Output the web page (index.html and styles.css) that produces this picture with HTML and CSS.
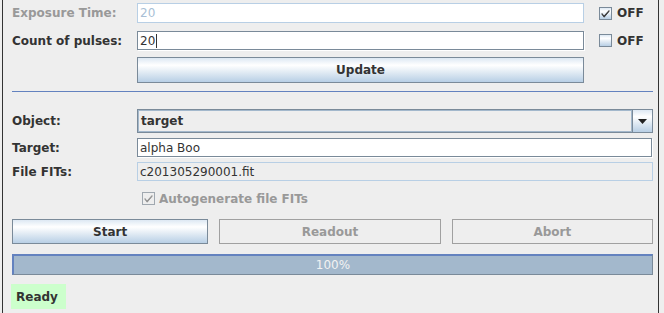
FILE: index.html
```
<!doctype html>
<html>

<head>
	<link rel="stylesheet" href="styles.css">
</head>

<body>
	<div class="frame">
		<div class="row r1">
			<label class="lbl off">Exposure Time:</label>
			<div class="field dis wide">20</div>
			<span class="check on"><svg width="9" height="9" viewBox="0 0 9 9"><path d="M1 4.5 L3 7 L8 1.5 L8 2.5 L3.2 8.2 L1 5.5 Z" fill="#333" stroke="#333" stroke-width="0.8"/></svg></span>
			<span class="ck-text">OFF</span>
		</div>
		<div class="row r2">
			<label class="lbl">Count of pulses:</label>
			<div class="field edit wide">20<span class="caret"></span></div>
			<span class="check"></span>
			<span class="ck-text">OFF</span>
		</div>
		<button class="btn update">Update</button>
		<div class="sep"></div>
		<div class="row r3">
			<label class="lbl">Object:</label>
			<div class="combo">
				<div class="combo-val">target</div>
				<div class="combo-arrow"><svg width="9" height="5" viewBox="0 0 9 5"><path d="M0 0 H9 L4.5 5 Z" fill="#222"/></svg></div>
			</div>
		</div>
		<div class="row r4">
			<label class="lbl">Target:</label>
			<div class="field edit full">alpha Boo</div>
		</div>
		<div class="row r5">
			<label class="lbl">File FITs:</label>
			<div class="field ro full">c201305290001.fit</div>
		</div>
		<div class="row r6">
			<span class="check dis-check"><svg width="9" height="9" viewBox="0 0 9 9"><path d="M1 4.5 L3 7 L8 1.5 L8 2.5 L3.2 8.2 L1 5.5 Z" fill="#8e8e8e" stroke="#8e8e8e" stroke-width="0.8"/></svg></span>
			<span class="ck-text off">Autogenerate file FITs</span>
		</div>
		<div class="row actions">
			<button class="btn start">Start</button>
			<button class="btn dis-btn readout">Readout</button>
			<button class="btn dis-btn abort">Abort</button>
		</div>
		<div class="progress"><span>100%</span></div>
		<div class="status">Ready</div>
	</div>
</body>

</html>
```
FILE: styles.css
```
body {
	margin: 0;
	background: #eeeeee;
	font-family: "DejaVu Sans", sans-serif;
	font-size: 12px;
	color: #333333;
}

.frame {
	margin-left: 2px;
	width: 657px;
	height: 313px;
	border-left: 1px solid #333;
	border-right: 1px solid #333;
	box-sizing: border-box;
	padding: 3px 5px 0 9px;
	display: flex;
	flex-direction: column;
}

.row {
	display: flex;
	align-items: center;
}

.lbl {
	width: 125px;
	flex: none;
	font-weight: bold;
}

.lbl.off,
.ck-text.off {
	color: #999999;
}

.field {
	box-sizing: border-box;
	height: 100%;
	padding: 0 2px;
	display: flex;
	align-items: center;
	white-space: nowrap;
}

.field.wide {
	width: 447px;
}

.field.full {
	width: 515px;
}

.field.dis {
	background: #fff;
	border: 1px solid #b8cfe5;
	color: #a9bfd6;
}

.field.edit {
	background: #fff;
	border: 1px solid #7a8a99;
	box-shadow: 1px 1px 0 #fff;
}

.field.ro {
	width: 516px;
	border: 1px solid #b8cfe5;
	background: #eeeeee;
}

.caret {
	display: inline-block;
	width: 1px;
	height: 14px;
	background: #333;
	margin-left: 1px;
}

.r1 {
	height: 20px;
}

.r2 {
	height: 19px;
	margin-top: 8px;
}

.check {
	box-sizing: border-box;
	width: 13px;
	height: 13px;
	margin-left: 15px;
	border: 1px solid #7a8a99;
	background: linear-gradient(#dde8f3, #ffffff 30%, #b8cfe5);
	display: flex;
	align-items: center;
	justify-content: center;
	flex: none;
}

.ck-text {
	margin-left: 5px;
	font-weight: bold;
}

.btn {
	font-family: "DejaVu Sans", sans-serif;
	font-size: 12px;
	font-weight: bold;
	color: #333;
	box-sizing: border-box;
	border: 1px solid #7a8a99;
	background: linear-gradient(#dde8f3, #ffffff 30%, #b8cfe5);
	padding: 0;
	margin: 0;
}

.update {
	margin: 7px 0 0 125px;
	width: 447px;
	height: 26px;
}

.sep {
	margin-top: 8px;
	height: 1px;
	background: #6382bf;
}

.r3 {
	margin-top: 17px;
	height: 24px;
}

.combo {
	width: 516px;
	height: 100%;
	box-sizing: border-box;
	border: 1px solid #7a8a99;
	display: flex;
}

.combo-val {
	flex: 1;
	border: 1px solid #a3b8cc;
	padding-left: 2px;
	font-weight: bold;
	display: flex;
	align-items: center;
}

.combo-arrow {
	width: 19px;
	border-left: 1px solid #7a8a99;
	background: linear-gradient(#dde8f3, #ffffff 30%, #b8cfe5);
	display: flex;
	align-items: center;
	justify-content: center;
}

.r4 {
	margin-top: 5px;
	height: 19px;
}

.r5 {
	margin-top: 5px;
	height: 19px;
}

.r6 {
	margin-top: 11px;
	height: 13px;
	padding-left: 130px;
}

.r6 .check {
	margin-left: 0;
}

.dis-check {
	border-color: #a0a8b0;
	background: #eeeeee;
}

.r6 .ck-text {
	margin-left: 4px;
}

.actions {
	margin-top: 14px;
	height: 25px;
	gap: 11px;
}

.actions .btn {
	height: 100%;
}

.start {
	width: 197px;
}

.readout {
	width: 222px;
}

.abort {
	width: 202px;
}

.dis-btn {
	background: #eeeeee;
	border-color: #a0a0a0;
	color: #999999;
}

.progress {
	margin-top: 10px;
	width: 641px;
	height: 21px;
	box-sizing: border-box;
	background: #a3b8cc;
	border: 1px solid #7a8a99;
	border-top: 2px solid #6382bf;
	border-left: 2px solid #6382bf;
	display: flex;
	align-items: center;
	justify-content: center;
	color: #f2f2f2;
}

.status {
	margin: 9px 0 0 -1px;
	width: 55px;
	height: 25px;
	background: #ccffcc;
	font-weight: bold;
	display: flex;
	align-items: center;
	padding-left: 5px;
	box-sizing: border-box;
}
```
